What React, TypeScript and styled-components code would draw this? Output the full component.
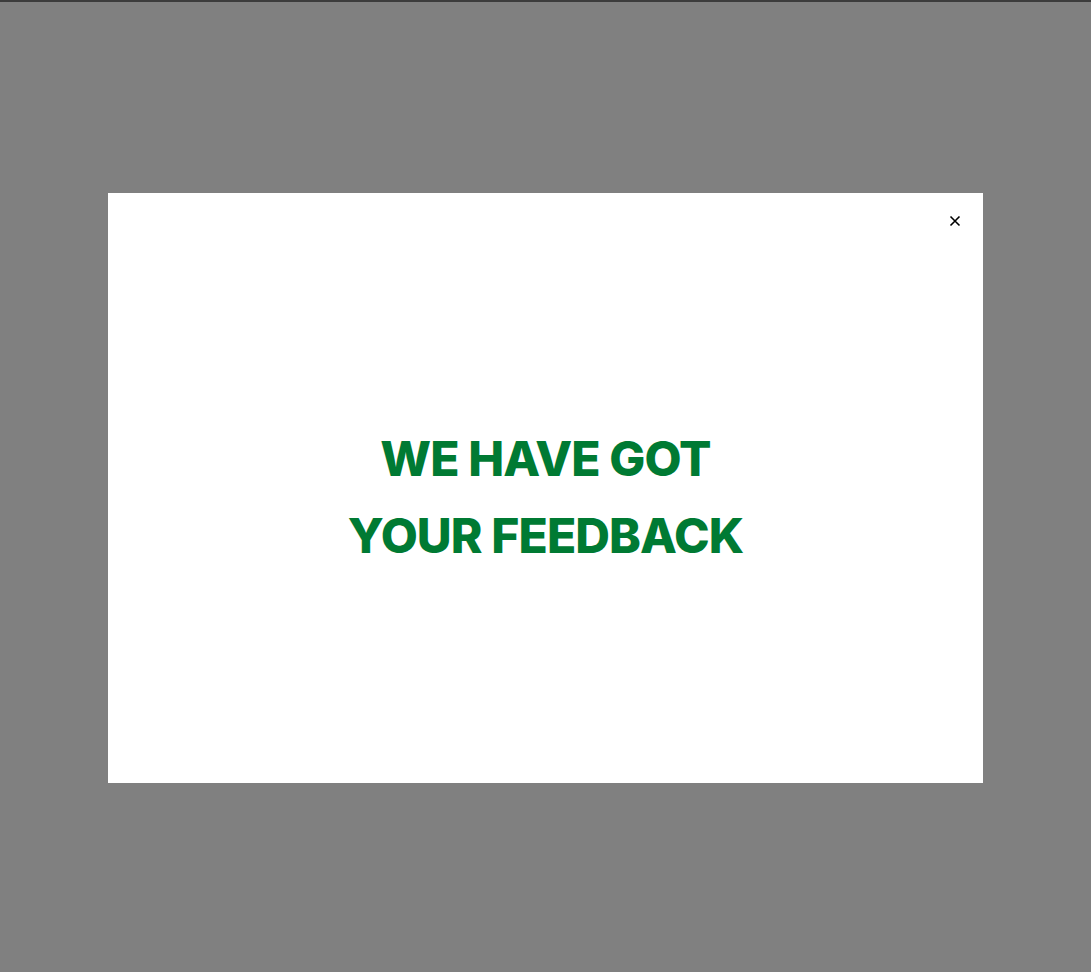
import React from 'react'
import styled, { createGlobalStyle } from 'styled-components'

const GlobalStyle = createGlobalStyle`
  html, body {
    margin: 0;
    padding: 0;
    height: 100%;
  }
  body {
    font-family: Inter, "Noto Sans", sans-serif;
  }
  #root {
    height: 100%;
  }
`

const Overlay = styled.div`
  box-sizing: border-box;
  height: 100vh;
  background: #808080;
  border-top: 2px solid #3c3c3c;
  display: flex;
  align-items: center;
  justify-content: center;
`

const Modal = styled.div`
  position: relative;
  width: 875px;
  height: 590px;
  margin-top: 2px;
  background: #ffffff;
  display: flex;
  align-items: center;
  justify-content: center;
`

const CloseButton = styled.button`
  position: absolute;
  top: 20px;
  right: 20px;
  width: 16px;
  height: 16px;
  padding: 0;
  border: 0;
  background: transparent;
  color: #000;
  cursor: pointer;

  svg {
    display: block;
  }
`

const Message = styled.h2`
  margin: 17px 0 0;
  font-family: Inter, "Noto Sans", sans-serif;
  font-weight: 800;
  font-size: 48px;
  line-height: 77px;
  letter-spacing: -0.9px;
  text-align: center;
  color: #007a33;
  text-transform: uppercase;
`

const App = () => {
  return (
    <>
      <GlobalStyle />
      <Overlay>
        <Modal>
          <CloseButton aria-label="Close">
            <svg width="16" height="16" viewBox="0 0 16 16">
              <path d="M3.5 3.5 L12.5 12.5 M12.5 3.5 L3.5 12.5" stroke="currentColor" strokeWidth="1.6" />
            </svg>
          </CloseButton>
          <Message>
            We have got
            <br />
            your feedback
          </Message>
        </Modal>
      </Overlay>
    </>
  )
}

export default App
